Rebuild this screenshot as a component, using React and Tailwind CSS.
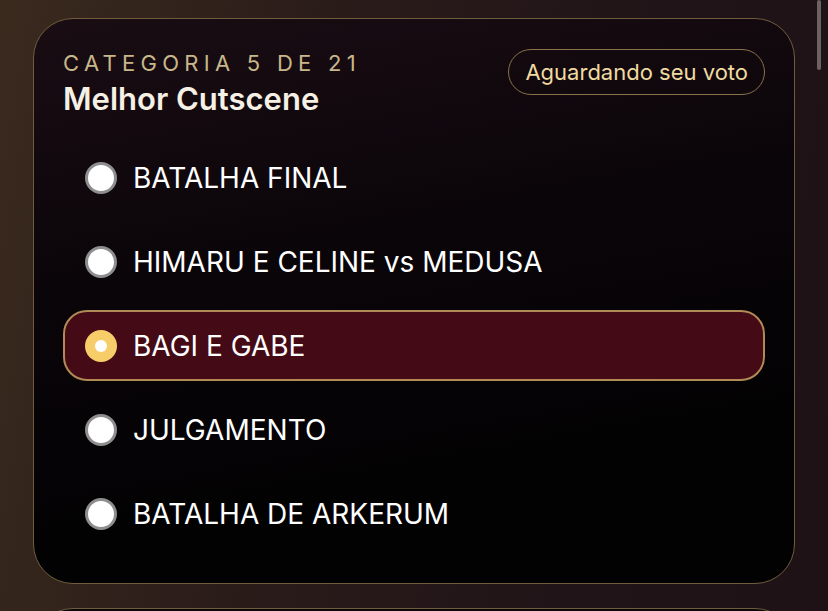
import React, { useState } from "react";

const options = [
  "BATALHA FINAL",
  "HIMARU E CELINE vs MEDUSA",
  "BAGI E GABE",
  "JULGAMENTO",
  "BATALHA DE ARKERUM",
];

const Radio = ({ checked }) =>
  checked ? (
    <span className="w-[32px] h-[32px] rounded-full bg-[#f7cd6a] flex items-center justify-center shrink-0">
      <span className="w-[12px] h-[12px] rounded-full bg-white"></span>
    </span>
  ) : (
    <span className="w-[32px] h-[32px] rounded-full bg-white border-[3px] border-[#8e8e8e] shrink-0"></span>
  );

const App = () => {
  const [selected, setSelected] = useState(2);

  return (
    <div
      className="relative min-h-[611px] h-[611px] overflow-hidden bg-[linear-gradient(100deg,#3a2a1e_0%,#2a1c19_35%,#211418_70%,#1f1216_100%)] px-[33px] pt-[18px]"
      style={{ fontFamily: "Inter, 'Liberation Sans', sans-serif" }}
    >
      <div className="rounded-[40px] border-[1.5px] border-[#6e5c3c] bg-[linear-gradient(170deg,#1a0d14_0%,#0a0509_40%,#030203_75%,#020203_100%)] px-[29px] pt-[30px] pb-[34px]">
        <div className="flex items-start justify-between">
          <div>
            <p className="text-[22px] leading-[28px] tracking-[0.24em] text-[#c8b78b]">
              CATEGORIA 5 DE 21
            </p>
            <h1 className="text-[31px] leading-[36px] font-semibold text-[#f6f1e4] mt-[4px]">
              Melhor Cutscene
            </h1>
          </div>
          <span className="h-[46px] px-[16px] rounded-full border-[1.5px] border-[#8a7249] text-[#f0daa0] text-[22px] flex items-center">
            Aguardando seu voto
          </span>
        </div>

        <div className="mt-[25px] flex flex-col gap-[13px]">
          {options.map((opt, i) => (
            <button
              key={opt}
              onClick={() => setSelected(i)}
              className={
                "h-[71px] flex items-center gap-[16px] pl-[20px] rounded-[24px] text-left border-2 " +
                (selected === i
                  ? "bg-[#440b17] border-[#b28a55]"
                  : "border-transparent")
              }
            >
              <Radio checked={selected === i} />
              <span className="text-[28px] text-white">{opt}</span>
            </button>
          ))}
        </div>
      </div>

      <div className="mt-[24px] h-[80px] rounded-t-[40px] border-[1.5px] border-[#6e5c3c] bg-[#0b0609]"></div>

      <div className="absolute right-[7px] top-0 w-[4px] h-[70px] rounded-full bg-[#8f8585]/70"></div>
    </div>
  );
};

export default App;
